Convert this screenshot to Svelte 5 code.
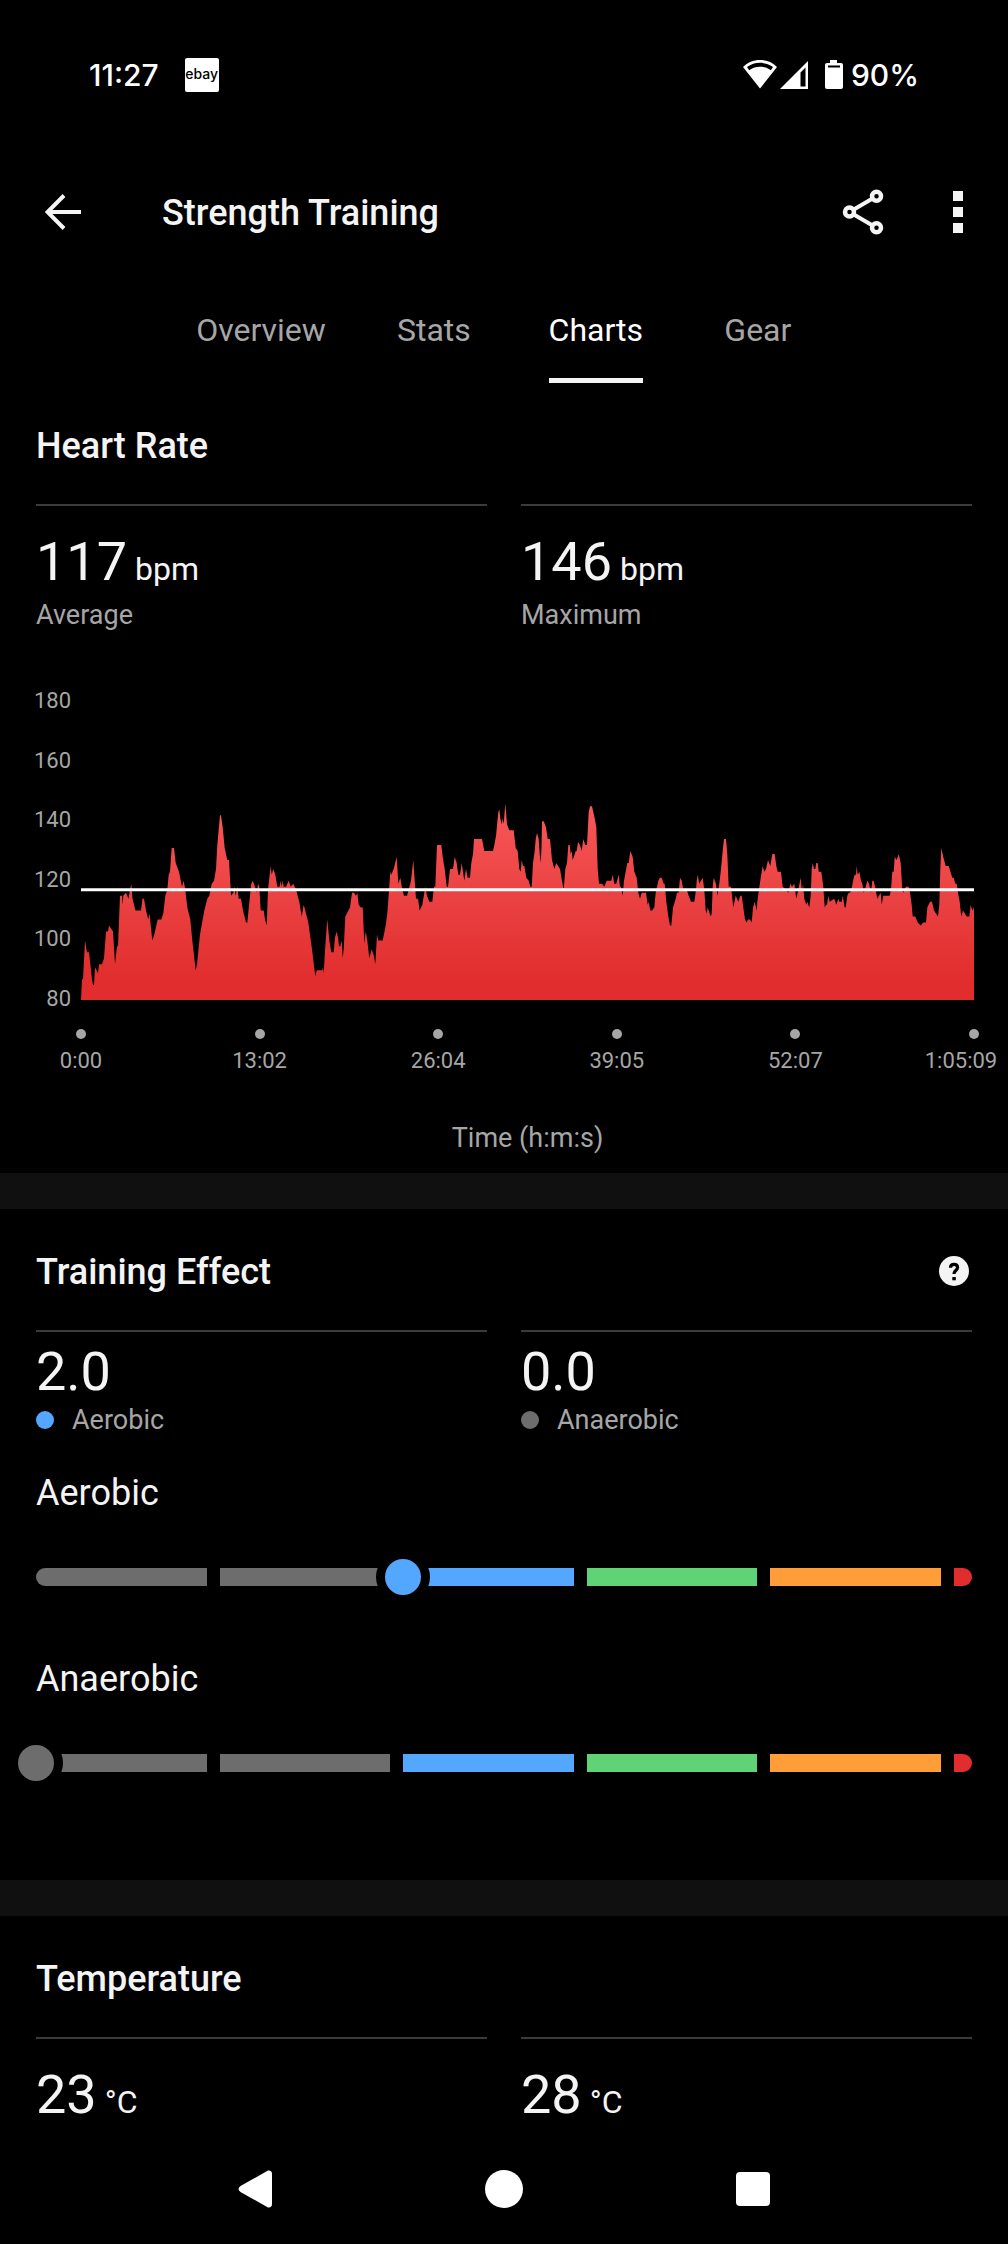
<script>
  let tabs = ['Overview', 'Stats', 'Charts', 'Gear']
  let activeTab = 'Charts'

  let heartRate = [
    { value: '117', unit: 'bpm', label: 'Average' },
    { value: '146', unit: 'bpm', label: 'Maximum' },
  ]

  let effects = [
    { name: 'Aerobic', value: 2, color: '#54a7ff' },
    { name: 'Anaerobic', value: 0, color: '#6d6d6d' },
  ]
  const zones = ['#6d6d6d', '#6d6d6d', '#54a7ff', '#61d377', '#ff9e39', '#e12d2d']

  let temperature = [
    { value: '23', unit: '°C' },
    { value: '28', unit: '°C' },
  ]

  const bpmTicks = [180, 160, 140, 120, 100, 80]
  const timeTicks = ['0:00', '13:02', '26:04', '39:05', '52:07', '1:05:09']

  // time,bpm pairs, time runs from 0 to 893
  const samples = `
    0,80 1,87 2,87 4,100 6,96 8,96 11,87 12,85 13,85 14,91 17,89 18,92 21,92 23,94 25,103 27,103 28,105
    32,103 34,92 36,98 37,98 39,115 41,115 41.5,112 42.3,115 45,116 47.5,114 49,117 50.3,119 51.5,114 54.5,110
    60,110 61.5,114 63,114 65,110 67.3,107 68.5,109 71.3,100 73.3,102 76.7,107 80.3,107 82.3,109 84.3,115
    86.3,117 87.7,122 89,123 90.7,131 93,131 94.7,126 98,123 101,118 102.7,120 104.3,117 106.3,111 109.3,107
    111.3,100 114.7,90 116,92 119,102 123.3,110 126.3,114 128.3,115 130.7,119 133,120 135,124 136.3,132 139,142
    140,142 141.7,138 143.7,131 146.3,127 148,127 150,115 152.3,116 153.3,118 154.7,115 156.3,118 157.7,114
    160,114 162,110 165,106 166.3,106 169,115 170.3,119 171.7,120 174,118 176,116 177,119 178.3,118 179.7,110
    182.7,110 184,107 185.7,105 187,117 188,120 189.7,125 190.7,122 192.3,124 194.3,122 196.3,118 198.7,118
    199.7,120 200.7,118 201.7,120 202.7,118 205,118 207.7,120 209.7,118 212.3,119 215,117 218.3,113 220.7,108
    222.7,112 225,109 227.3,106 231,97 234.3,88 235.7,90 241.3,90 242,91 242.7,89 244.3,98 246.3,107 248.3,100
    250.3,96 252.7,96 254,101 255.7,103 257,101 258,98 259.3,98 260.7,100 261.7,94 262.7,97 264.3,108 269,111
    271,116 273,116 275,115 276.3,116 277.7,112 279.7,111 281.7,111 283.3,99 284.7,103 286.3,100 288.3,94
    290.7,97 292.7,95 294.3,92 296,102 297.3,100 301.7,100 304.7,105 306.3,109 308.3,118 309.3,123 310.3,122
    312.7,124 315.7,128 317.3,119 319.3,121 321.3,117 323,115 326,115 327.7,117 330,120 332.3,127 333.3,122
    335,114 337,114 338.7,110 341.3,112 344.3,118 346,115 348.3,113 351.3,113 353,118 354.3,118 356,132
    360.3,132 361.7,128 363.7,124 365.7,118 367,118 369,124 372,124 373.7,128 375.7,126 377.3,122 379,122
    380.7,126 383.3,120 385,124 386.7,121 389,121 390.3,126 392,129 393,134 401,134 403.3,130 412,130 413.3,132
    415,135 417.3,143 418.3,144 419.3,141 420.7,139 421.7,141 422.7,139 424.3,146 426,139 428.3,137 432.7,137
    434.7,131 436.7,130 438.3,124 439.7,123 440.7,127 442,125 443.3,125 445.3,121 447.7,120 449.3,118 450.7,118
    452,126 453.7,130 454.7,134 456,136 457.7,134 458.7,129 459.7,126 460.5,131 461,140 462.7,140 465,138
    466.7,134 469,134 471,127 473.3,124 475.3,126 479,124 481,120 482.7,117 484.3,124 486,126 487.3,132 488.7,132
    489.7,129 490.7,130 491.7,127 494.7,130 495.7,130 497,133 499,132 500.7,130 502.3,134 504.3,132 506,132
    507.7,143 509,145 511,145 513.7,141 515.3,138 516.7,124 518,119 521,119 523.3,118 525.7,120 530.3,120
    531.7,122 533.3,119 535.3,119 537.7,122 539,118 540,118 541.7,115 543,120 546.3,126 547.7,126 549.3,130
    551.7,128 553.3,123 555.7,121 557.3,116 559,114 560.7,116 565,116 566.7,112 567.7,113 569.3,110 571,110
    573.3,111 574.7,116 577.3,120 579,121 580.7,121 582.7,119 583.7,119 585.3,113 587.3,108 589,105 590.3,105
    592,111 594.7,114 596,116 597.7,116 599,121 600.7,120 602.3,117 605.7,117 607.7,115 610,113 613.3,113
    615,117 615.7,120 616.7,122 618.3,119 620,120 621.7,121 623.3,117 624.7,110 625.7,109 626.7,111 629.7,108
    630.7,109 631.7,118 632.7,121 635,119 636.3,115 638.3,119 640,124 641.7,130 643,134 645,134 646.3,129
    647.7,118 650,118 651,115 652.3,111 654.7,115 657.3,113 659.3,115 660.7,115 662.3,111 664,107 665.7,106
    667,107 669,107 670.7,106 672,111 673.7,113 675.7,110 676.3,113 678,117 679.7,121 681.7,125 683.3,123
    685,124 687,127 689.3,125 691.3,129 693.7,129 695.3,125 696.7,123 700,123 701.7,118 705,117 707.3,116
    709.3,119 711,118 713.3,119 715.3,114 717.3,117 719.7,121 721,116 722,119 723.3,114 725.3,112 726.3,113
    728.3,111 729.7,115 730.7,124 731.7,126 733,124 734.3,124 735.3,126 736.7,126 737.7,123 740.3,123 742.3,118
    743.7,111 745,112 746,112 747.3,115 748.7,113 753.3,114 755.3,112 757.3,114 758.3,113 760.7,113 761.7,115
    763.7,111 764.7,111 766.3,115 767.7,116 769,116 771,118 772.7,121 773.7,122 775,122 775.7,125 776.7,122
    778.3,123 780,120 781.3,119 782.7,116 784.7,118 786.3,120 788,119 790,116 791.3,120 792.7,120 794.7,117
    796.3,114 799.7,116 800.7,112 802.3,115 808.7,115 810,117 811.3,123 812.7,123 813.7,128 815.7,127 817.7,129
    819.7,126 821.3,117 822.3,116 824.7,118 827.7,118 829,116 830.7,112 831.7,108 834.3,108 836.7,106 839.7,105
    842.3,106 845,106 846.3,111 849,113 851,113 853,110 855,109 857,108 858.3,112 859.3,124 860.3,131 862.3,128
    864.7,125 867.7,125 871.3,121 872.7,121 874.3,119 875.7,119 877,116 878.7,113 880.3,108 882,110 885.7,108
    888.3,108 889.7,112 891.3,110 893,111`

  const points = samples.trim().split(/\s+/).map((pair) => pair.split(',').map(Number))
  const area = 'M0 100' + points.map(([x, bpm]) => `L${x} ${180 - bpm}`).join('') + 'L893 100Z'
</script>

<div class="screen">
  <div class="status">
    <span>11:27</span>
    <span class="ebay">ebay</span>
    <span class="status-icons">
      <svg width="34" height="30" viewBox="0 0 34 30">
        <path d="M17 0C10.500 0 4.500 2.500 0 7L17 28.500 34 7C29.500 2.500 23.500 0 17 0ZM17 2.800c4.700 0 9.200 1.500 13 4.300l-2.200 3.200C24.500 7.800 20.900 6.700 17 6.700S9.500 7.800 6.200 10.300L4 7.100C7.800 4.300 12.300 2.800 17 2.800Z" fill="#fff" fill-rule="evenodd" />
      </svg>
      <svg width="28" height="30" viewBox="0 0 28 30">
        <path d="M28 1V29H0ZM25.500 7.500 20.500 12.500V26.500H25.500Z" fill="#fff" fill-rule="evenodd" />
      </svg>
      <svg class="battery" width="18" height="30" viewBox="0 0 18 30">
        <path d="M5 0H12V3H16Q18 3 18 5V27Q18 29 16 29H2Q0 29 0 27V5Q0 3 2 3H5ZM3 5.500V7.500H15V5.500Z" fill="#fff" fill-rule="evenodd" />
      </svg>
    </span>
    <span>90%</span>
  </div>

  <header>
    <button aria-label="Back">
      <svg width="36" height="36" viewBox="0 0 36 36" fill="none" stroke="#f4f4f4" stroke-width="4">
        <path d="M36 18H3M19 1.500 2.500 18 19 34.500" />
      </svg>
    </button>
    <h1>Strength Training</h1>
    <button aria-label="Share">
      <svg width="42" height="46" viewBox="0 0 42 46" fill="none" stroke="#f4f4f4">
        <path d="M34 7.500 7.500 23 34 38.500" stroke-width="4" />
        <g fill="#000" stroke-width="4.500">
          <circle cx="34.500" cy="7.300" r="4.500" />
          <circle cx="7.500" cy="23" r="4.500" />
          <circle cx="34.500" cy="38.700" r="4.500" />
        </g>
      </svg>
    </button>
    <button class="more" aria-label="More options">
      <svg width="10" height="42" viewBox="0 0 10 42" fill="#f4f4f4">
        <rect width="10" height="10" />
        <rect y="16" width="10" height="10" />
        <rect y="32" width="10" height="10" />
      </svg>
    </button>
  </header>

  <nav class="tabs">
    {#each tabs as tab}
      <button class:active={tab === activeTab} on:click={() => (activeTab = tab)}>
        <span>{tab}</span>
      </button>
    {/each}
  </nav>

  <main>
    <section>
      <h2>Heart Rate</h2>
      <div class="stats">
        {#each heartRate as { value, unit, label }}
          <div class="stat">
            <p class="value">{value} <small>{unit}</small></p>
            <p class="label">{label}</p>
          </div>
        {/each}
      </div>

      <div class="chart">
        <div class="bpm-axis">
          {#each bpmTicks as tick}
            <span>{tick}</span>
          {/each}
        </div>
        <div class="plot">
          <svg class="graph" viewBox="0 0 893 100" preserveAspectRatio="none" role="img" aria-label="Heart rate over time">
            <defs>
              <linearGradient id="hr" gradientUnits="userSpaceOnUse" x1="0" y1="34" x2="0" y2="100">
                <stop offset="0" stop-color="#f95859" />
                <stop offset="0.450" stop-color="#eb4344" />
                <stop offset="0.900" stop-color="#e12d2d" />
              </linearGradient>
            </defs>
            <path d={area} fill="url(#hr)" />
            <line x1="0" x2="893" y1="63" y2="63" stroke="#fff" stroke-width="3" vector-effect="non-scaling-stroke" />
          </svg>
          <ul class="time-axis">
            {#each timeTicks as tick}
              <li><i></i><span>{tick}</span></li>
            {/each}
          </ul>
          <p class="axis-title">Time (h:m:s)</p>
        </div>
      </div>
    </section>

    <section class="training">
      <div class="title-row">
        <h2>Training Effect</h2>
        <button aria-label="Help">
          <svg width="30" height="30" viewBox="0 0 30 30">
            <circle cx="15" cy="15" r="15" fill="#f4f4f4" />
            <path d="M11.500 11.800C11.500 9.500 13 8.300 15.100 8.300S18.600 9.500 18.600 11.600C18.600 14.300 15 14.300 15 18" fill="none" stroke="#000" stroke-width="3.200" />
            <rect x="13.300" y="21" width="3.500" height="3.300" fill="#000" />
          </svg>
        </button>
      </div>
      <div class="stats">
        {#each effects as { name, value, color }}
          <div class="stat">
            <p class="value">{value.toFixed(1)}</p>
            <p class="label"><i style="background: {color}"></i>{name}</p>
          </div>
        {/each}
      </div>
      {#each effects as { name, value, color }}
        <div class="effect">
          <label for={name}>{name}</label>
          <div class="scale">
            {#each zones as zone}
              <i style="background: {zone}"></i>
            {/each}
            <input id={name} type="range" min="0" max="5" step="0.1" {value} style="--thumb: {color}" />
          </div>
        </div>
      {/each}
    </section>

    <section>
      <h2>Temperature</h2>
      <div class="stats">
        {#each temperature as { value, unit }}
          <div class="stat">
            <p class="value">{value} <small>{unit}</small></p>
          </div>
        {/each}
      </div>
    </section>
  </main>

  <nav class="system">
    <button aria-label="System back">
      <svg width="40" height="40" viewBox="0 0 40 40" fill="#fff">
        <path d="M33 1.500C35.500 1 37 2.500 37 5V35C37 37.500 35.500 39 33 38.500L5.500 23Q1.500 20 5.500 17Z" />
      </svg>
    </button>
    <button aria-label="Home">
      <svg width="40" height="40" viewBox="0 0 40 40" fill="#fff"><circle cx="20" cy="20" r="19" /></svg>
    </button>
    <button aria-label="Recent apps">
      <svg width="40" height="40" viewBox="0 0 40 40" fill="#fff"><rect x="3" y="3" width="34" height="34" rx="4" /></svg>
    </button>
  </nav>
</div>

<style>
  :global(body) {
    background: #000;
  }
  .screen {
    display: flex;
    flex-direction: column;
    min-height: 100vh;
    overflow: hidden;
    background: #000;
    color: #f4f4f4;
    font-family: Roboto, sans-serif;
  }
  h1, h2, p, ul {
    margin: 0;
    padding: 0;
  }
  button {
    display: flex;
    padding: 0;
    border: 0;
    background: none;
    color: inherit;
    font: inherit;
  }
  svg {
    display: block;
  }
  .status {
    display: flex;
    align-items: center;
    height: 150px;
    padding: 0 89px;
    color: #fff;
    font: 500 30px/40px Inter, sans-serif;
  }
  .ebay {
    width: 34px;
    height: 34px;
    margin-left: 26px;
    border-radius: 2px;
    background: #fff;
    color: #000;
    font: 500 14px/32px Inter, sans-serif;
    text-align: center;
  }
  .status-icons {
    display: flex;
    gap: 3px;
    margin-left: auto;
    margin-right: 8px;
  }
  .battery {
    margin-left: 14px;
  }
  header {
    display: flex;
    align-items: center;
    height: 124px;
    padding: 0 45px;
  }
  h1, h2 {
    padding-top: 2px;
    font-size: 36px;
    line-height: 40px;
    font-weight: 500;
  }
  h1 {
    flex: 1;
    margin-left: 81px;
  }
  .more {
    margin-left: 69px;
  }
  .tabs {
    display: flex;
    justify-content: center;
  }
  .tabs button {
    justify-content: center;
    min-width: 162px;
    padding: 0 27px;
    color: #a6a6a6;
    font-size: 32px;
    line-height: 40px;
  }
  .tabs span {
    padding: 36px 0 28px;
    border-bottom: 5px solid transparent;
  }
  .tabs .active {
    color: #fff;
  }
  .tabs .active span {
    border-color: #f4f4f4;
  }
  main {
    flex: 1;
  }
  section {
    padding: 41px 36px 0;
  }
  section + section {
    border-top: 36px solid #101010;
  }
  .title-row {
    display: flex;
    justify-content: space-between;
    align-items: center;
    padding-right: 3px;
  }
  .stats {
    display: grid;
    grid-template-columns: 1fr 1fr;
    gap: 34px;
    margin-top: 38px;
  }
  .stat {
    padding-top: 24px;
    border-top: 2px solid #3b3b3b;
  }
  .value {
    display: flex;
    align-items: baseline;
    gap: 8px;
    font-size: 54px;
    line-height: 64px;
  }
  small {
    font-size: 32px;
    line-height: 32px;
  }
  .label {
    display: flex;
    align-items: center;
    margin-top: 5px;
    color: #a6a6a6;
    font-size: 27px;
    line-height: 32px;
  }
  .label i {
    width: 18px;
    height: 18px;
    margin-right: 18px;
    border-radius: 50%;
  }
  .chart {
    display: flex;
    margin: 57px -2px 0;
    color: #a6a6a6;
    font-size: 22px;
    line-height: 26px;
  }
  .bpm-axis {
    display: flex;
    flex-direction: column;
    justify-content: space-between;
    width: 47px;
    height: 324px;
    padding-right: 10px;
    box-sizing: border-box;
    text-align: right;
  }
  .plot {
    flex: 1;
    padding-top: 14px;
  }
  .graph {
    width: 100%;
    height: 298px;
  }
  .time-axis {
    display: flex;
    justify-content: space-between;
    margin-top: 29px;
    list-style: none;
  }
  .time-axis li {
    display: flex;
    flex-direction: column;
    align-items: center;
    gap: 9px;
    width: 0;
  }
  .time-axis i {
    width: 10px;
    height: 10px;
    border-radius: 50%;
    background: #a6a6a6;
  }
  .time-axis li:last-child span {
    margin-right: 26px;
  }
  .axis-title {
    margin: 48px 0 19px;
    font-size: 27px;
    line-height: 32px;
    text-align: center;
  }
  .training {
    padding-bottom: 108px;
  }
  .training .stat {
    padding-top: 8px;
  }
  .training .label {
    margin-top: 0;
  }
  .effect {
    margin-top: 37px;
  }
  .effect + .effect {
    margin-top: 73px;
  }
  label {
    display: block;
    font-size: 36px;
    line-height: 40px;
  }
  .scale {
    position: relative;
    display: flex;
    gap: 13px;
    height: 18px;
    margin-top: 55px;
  }
  .scale i {
    flex: 1;
  }
  .scale i:first-child {
    border-radius: 9px 0 0 9px;
  }
  .scale i:nth-child(6) {
    flex: none;
    width: 18px;
    border-radius: 0 9px 9px 0;
  }
  input {
    position: absolute;
    top: -9px;
    left: -18px;
    width: calc(100% + 18px);
    height: 36px;
    margin: 0;
    background: none;
    appearance: none;
  }
  input::-webkit-slider-thumb {
    width: 36px;
    height: 36px;
    border-radius: 50%;
    background: var(--thumb);
    box-shadow: 0 0 0 9px #000;
    appearance: none;
  }
  .system {
    display: flex;
    justify-content: center;
    align-items: center;
    gap: 209px;
    height: 110px;
  }
</style>
